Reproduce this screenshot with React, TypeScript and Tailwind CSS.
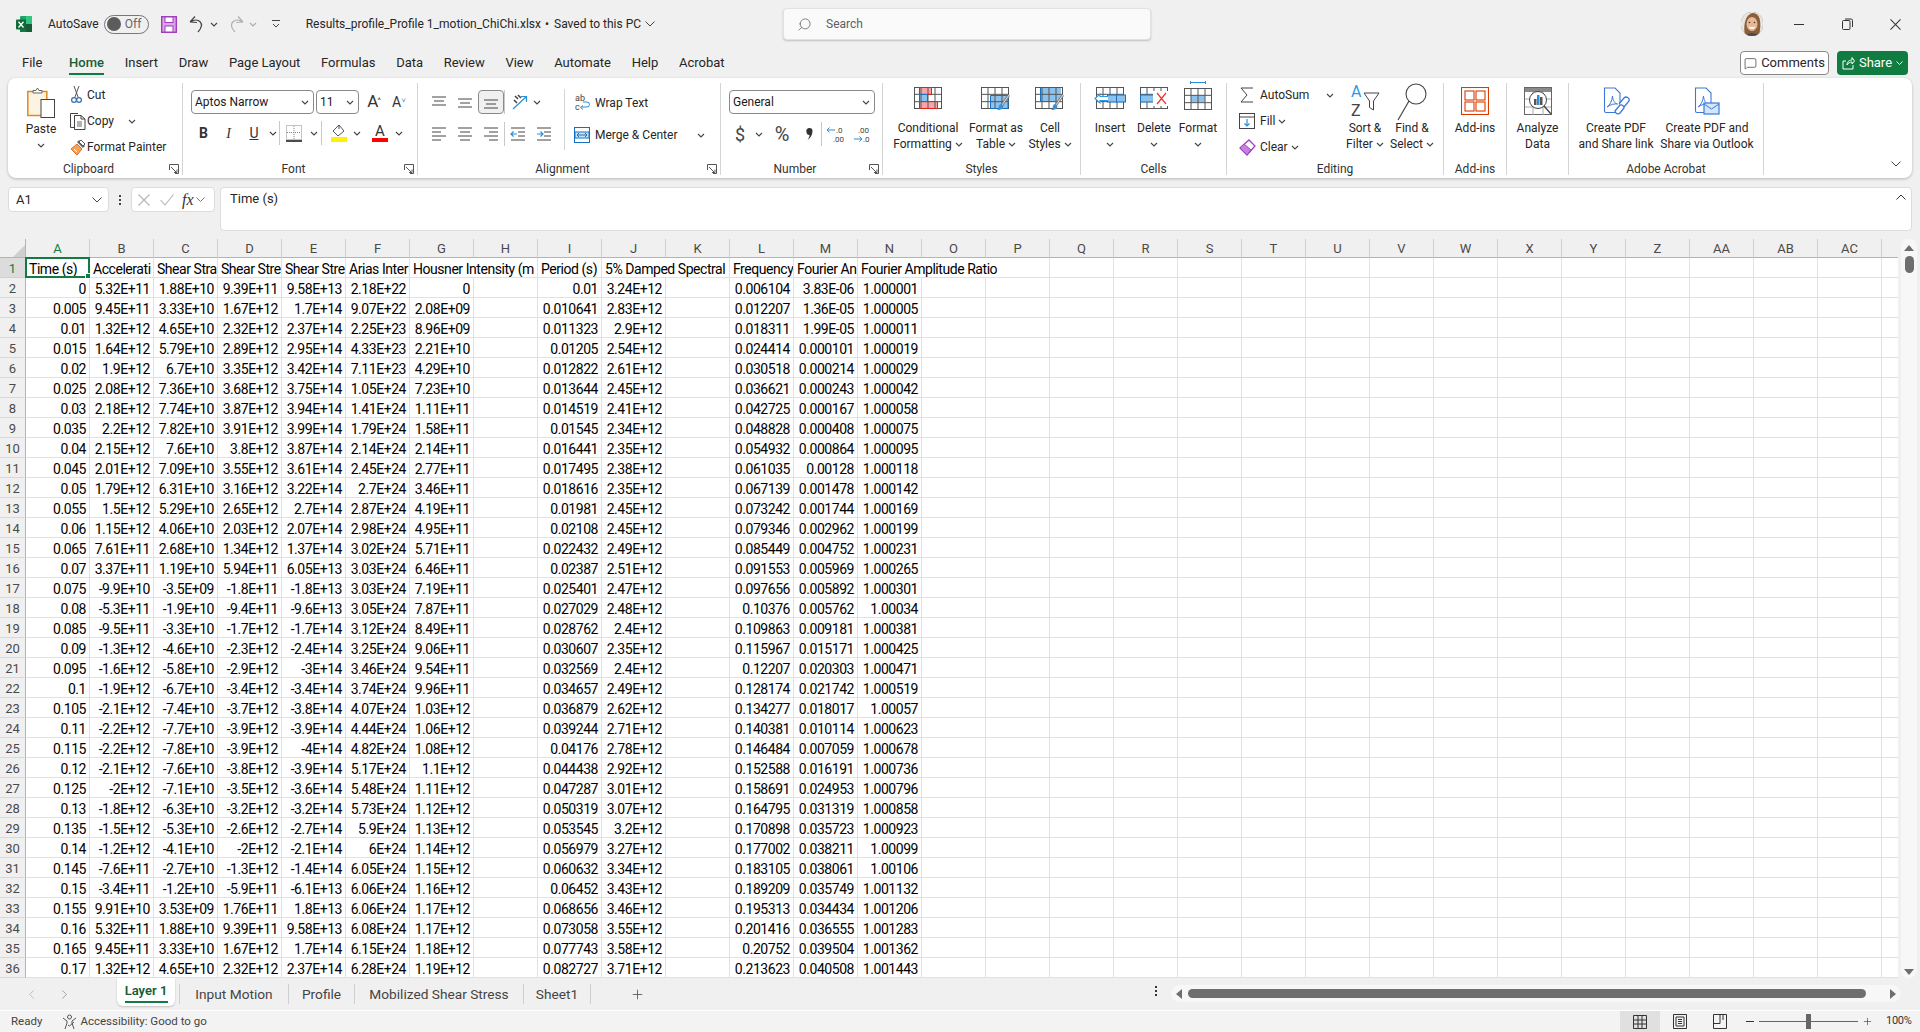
import type { ReactNode } from "react";
import { Search, Plus, ChevronLeft, ChevronRight, MessageSquare } from "lucide-react";

const FONT = "font-['Roboto','Liberation_Sans',sans-serif]";

const colLabels = "A B C D E F G H I J K L M N O P Q R S T U V W X Y Z AA AB AC".split(" ");

const titleCells = [
  { text: "Time (s)", span: "" },
  { text: "Accelerati", span: "" },
  { text: "Shear Stra", span: "" },
  { text: "Shear Stre", span: "" },
  { text: "Shear Stre", span: "" },
  { text: "Arias Inter", span: "" },
  { text: "Housner Intensity (m", span: "col-span-2" },
  { text: "Period (s)", span: "" },
  { text: "5% Damped Spectral", span: "col-span-2" },
  { text: "Frequency", span: "" },
  { text: "Fourier An", span: "" },
  { text: "Fourier Amplitude Ratio", span: "col-span-3" },
];

// A..G, H empty, I, J, K empty, L, M, N
const rawRows = `0|5.32E+11|1.88E+10|9.39E+11|9.58E+13|2.18E+22|0|0.01|3.24E+12|0.006104|3.83E-06|1.000001
0.005|9.45E+11|3.33E+10|1.67E+12|1.7E+14|9.07E+22|2.08E+09|0.010641|2.83E+12|0.012207|1.36E-05|1.000005
0.01|1.32E+12|4.65E+10|2.32E+12|2.37E+14|2.25E+23|8.96E+09|0.011323|2.9E+12|0.018311|1.99E-05|1.000011
0.015|1.64E+12|5.79E+10|2.89E+12|2.95E+14|4.33E+23|2.21E+10|0.01205|2.54E+12|0.024414|0.000101|1.000019
0.02|1.9E+12|6.7E+10|3.35E+12|3.42E+14|7.11E+23|4.29E+10|0.012822|2.61E+12|0.030518|0.000214|1.000029
0.025|2.08E+12|7.36E+10|3.68E+12|3.75E+14|1.05E+24|7.23E+10|0.013644|2.45E+12|0.036621|0.000243|1.000042
0.03|2.18E+12|7.74E+10|3.87E+12|3.94E+14|1.41E+24|1.11E+11|0.014519|2.41E+12|0.042725|0.000167|1.000058
0.035|2.2E+12|7.82E+10|3.91E+12|3.99E+14|1.79E+24|1.58E+11|0.01545|2.34E+12|0.048828|0.000408|1.000075
0.04|2.15E+12|7.6E+10|3.8E+12|3.87E+14|2.14E+24|2.14E+11|0.016441|2.35E+12|0.054932|0.000864|1.000095
0.045|2.01E+12|7.09E+10|3.55E+12|3.61E+14|2.45E+24|2.77E+11|0.017495|2.38E+12|0.061035|0.00128|1.000118
0.05|1.79E+12|6.31E+10|3.16E+12|3.22E+14|2.7E+24|3.46E+11|0.018616|2.35E+12|0.067139|0.001478|1.000142
0.055|1.5E+12|5.29E+10|2.65E+12|2.7E+14|2.87E+24|4.19E+11|0.01981|2.45E+12|0.073242|0.001744|1.000169
0.06|1.15E+12|4.06E+10|2.03E+12|2.07E+14|2.98E+24|4.95E+11|0.02108|2.45E+12|0.079346|0.002962|1.000199
0.065|7.61E+11|2.68E+10|1.34E+12|1.37E+14|3.02E+24|5.71E+11|0.022432|2.49E+12|0.085449|0.004752|1.000231
0.07|3.37E+11|1.19E+10|5.94E+11|6.05E+13|3.03E+24|6.46E+11|0.02387|2.51E+12|0.091553|0.005969|1.000265
0.075|-9.9E+10|-3.5E+09|-1.8E+11|-1.8E+13|3.03E+24|7.19E+11|0.025401|2.47E+12|0.097656|0.005892|1.000301
0.08|-5.3E+11|-1.9E+10|-9.4E+11|-9.6E+13|3.05E+24|7.87E+11|0.027029|2.48E+12|0.10376|0.005762|1.00034
0.085|-9.5E+11|-3.3E+10|-1.7E+12|-1.7E+14|3.12E+24|8.49E+11|0.028762|2.4E+12|0.109863|0.009181|1.000381
0.09|-1.3E+12|-4.6E+10|-2.3E+12|-2.4E+14|3.25E+24|9.06E+11|0.030607|2.35E+12|0.115967|0.015171|1.000425
0.095|-1.6E+12|-5.8E+10|-2.9E+12|-3E+14|3.46E+24|9.54E+11|0.032569|2.4E+12|0.12207|0.020303|1.000471
0.1|-1.9E+12|-6.7E+10|-3.4E+12|-3.4E+14|3.74E+24|9.96E+11|0.034657|2.49E+12|0.128174|0.021742|1.000519
0.105|-2.1E+12|-7.4E+10|-3.7E+12|-3.8E+14|4.07E+24|1.03E+12|0.036879|2.62E+12|0.134277|0.018017|1.00057
0.11|-2.2E+12|-7.7E+10|-3.9E+12|-3.9E+14|4.44E+24|1.06E+12|0.039244|2.71E+12|0.140381|0.010114|1.000623
0.115|-2.2E+12|-7.8E+10|-3.9E+12|-4E+14|4.82E+24|1.08E+12|0.04176|2.78E+12|0.146484|0.007059|1.000678
0.12|-2.1E+12|-7.6E+10|-3.8E+12|-3.9E+14|5.17E+24|1.1E+12|0.044438|2.92E+12|0.152588|0.016191|1.000736
0.125|-2E+12|-7.1E+10|-3.5E+12|-3.6E+14|5.48E+24|1.11E+12|0.047287|3.01E+12|0.158691|0.024953|1.000796
0.13|-1.8E+12|-6.3E+10|-3.2E+12|-3.2E+14|5.73E+24|1.12E+12|0.050319|3.07E+12|0.164795|0.031319|1.000858
0.135|-1.5E+12|-5.3E+10|-2.6E+12|-2.7E+14|5.9E+24|1.13E+12|0.053545|3.2E+12|0.170898|0.035723|1.000923
0.14|-1.2E+12|-4.1E+10|-2E+12|-2.1E+14|6E+24|1.14E+12|0.056979|3.27E+12|0.177002|0.038211|1.00099
0.145|-7.6E+11|-2.7E+10|-1.3E+12|-1.4E+14|6.05E+24|1.15E+12|0.060632|3.34E+12|0.183105|0.038061|1.00106
0.15|-3.4E+11|-1.2E+10|-5.9E+11|-6.1E+13|6.06E+24|1.16E+12|0.06452|3.43E+12|0.189209|0.035749|1.001132
0.155|9.91E+10|3.53E+09|1.76E+11|1.8E+13|6.06E+24|1.17E+12|0.068656|3.46E+12|0.195313|0.034434|1.001206
0.16|5.32E+11|1.88E+10|9.39E+11|9.58E+13|6.08E+24|1.17E+12|0.073058|3.55E+12|0.201416|0.036555|1.001283
0.165|9.45E+11|3.33E+10|1.67E+12|1.7E+14|6.15E+24|1.18E+12|0.077743|3.58E+12|0.20752|0.039504|1.001362
0.17|1.32E+12|4.65E+10|2.32E+12|2.37E+14|6.28E+24|1.19E+12|0.082727|3.71E+12|0.213623|0.040508|1.001443`;

const rows = rawRows.split("\n").map((line) => {
  const v = line.split("|");
  return [...v.slice(0, 7), "", v[7], v[8], "", v[9], v[10], v[11]];
});

function Chev({ className = "" }: { className?: string }) {
  return (
    <svg width="8" height="5" viewBox="0 0 8 5" fill="none" className={`shrink-0 ${className}`}>
      <path d="M1 1l3 3 3-3" stroke="#444" strokeWidth="1.1" />
    </svg>
  );
}

function XMark({ size, color, className = "" }: { size: number; color: string; className?: string }) {
  return (
    <svg width={size} height={size} viewBox="0 0 12 12" fill="none" className={`shrink-0 ${className}`}>
      <path d="M.5.5L11.500 11.500M11.500.5L.5 11.500" stroke={color} strokeWidth="1.100" />
    </svg>
  );
}

function Group({ width, label, launcher, children }: { width: string; label?: string; launcher?: boolean; children: ReactNode }) {
  return (
    <div className={`${width} h-[92px] shrink-0 flex flex-col border-r border-[#d4d4d4]`}>
      <div className="h-[78px] flex">{children}</div>
      <div className="h-[14px] pt-[1px] flex items-center">
        <span className="flex-1 text-center text-[12px] leading-[14px] text-[#333]">{label}</span>
        {launcher && (
          <svg width="10" height="10" viewBox="0 0 10 10" fill="none" className="mr-[3px]">
            <path d="M.5 6V.5H9.5V9.5H6M2 3l6 6M8 5.5V8.5H5" stroke="#555" strokeWidth="1" />
          </svg>
        )}
      </div>
    </div>
  );
}

function BigBtn({ width, icon, lines, chev }: { width: string; icon: ReactNode; lines: string[]; chev?: boolean }) {
  return (
    <div className={`${width} flex flex-col items-center text-[12px] leading-[16px] text-[#262626]`}>
      <div className="h-[37px] pt-[4px] flex items-start justify-center">{icon}</div>
      {lines.map((l, i) => (
        <div key={i} className="flex items-center gap-[3px] whitespace-nowrap">
          {l}
          {chev && lines.length > 1 && i === lines.length - 1 && <Chev />}
        </div>
      ))}
      {chev && lines.length === 1 && (
        <div className="h-[16px] flex items-center">
          <Chev />
        </div>
      )}
    </div>
  );
}

function ComboBox({ width, text }: { width: string; text: string }) {
  return (
    <div className={`${width} h-[24px] rounded-[4px] border border-[#8a8a8a] bg-white flex items-center justify-between pl-[3px] pr-[4px] text-[12px] text-[#1a1a1a]`}>
      <span>{text}</span>
      <Chev />
    </div>
  );
}

function Slot({ width, children, className = "" }: { width: string; children: ReactNode; className?: string }) {
  return <div className={`${width} h-[24px] shrink-0 flex items-center justify-center ${className}`}>{children}</div>;
}

const VSep = () => <div className="w-[1px] h-[24px] bg-[#c8c8c8] shrink-0" />;

function AlignLines({ ys, x }: { ys: number[]; x: number[][] }) {
  return (
    <svg width="16" height="16" viewBox="0 0 16 16" fill="none">
      {ys.map((y, i) => (
        <path key={i} d={`M${x[i][0]} ${y}H${x[i][1]}`} stroke="#444" strokeWidth="1" />
      ))}
    </svg>
  );
}

function Grid4({ w = 28, h = 22 }: { w?: number; h?: number }) {
  const cw = w / 4;
  return (
    <g stroke="#555" strokeWidth="1" fill="none">
      <rect x=".5" y=".5" width={w - 1} height={h - 1} />
      <path d={`M${cw} 0V${h}M${cw * 2} 0V${h}M${cw * 3} 0V${h}M0 ${h / 3}H${w}M0 ${(h * 2) / 3}H${w}`} />
    </g>
  );
}

const Brush = () => (
  <g>
    <path d="M28 8L21 18" stroke="#7a7a7a" strokeWidth="2.6" />
    <path d="M28 8L21 18" stroke="#fff" strokeWidth=".8" />
    <path d="M20 17c2 .5 3 2 2 4-1 1.5-3 2-6 2 1.500-1 1.500-2 2-4 .4-1.200 1-2 2-2z" fill="#3a8fd6" />
  </g>
);

const ExcelLogo = () => (
  <svg width="16" height="16" viewBox="0 0 16 16">
    <rect x="4" y="0" width="12" height="16" rx="1" fill="#21a366" />
    <rect x="10" y="0" width="6" height="8" fill="#33c481" />
    <rect x="4" y="8" width="6" height="8" fill="#107c41" />
    <rect x="10" y="8" width="6" height="8" fill="#185c37" />
    <rect x="0" y="3.500" width="10" height="10" rx="1" fill="#0f6b3a" />
    <path d="M2.500 5.800L7.500 11.500M7.500 5.800L2.500 11.500" stroke="#fff" strokeWidth="1.300" />
  </svg>
);

const SaveIcon = () => (
  <svg width="16" height="17" viewBox="0 0 16 17" fill="none">
    <rect x=".7" y=".7" width="14.6" height="15.6" fill="#d9a7e6" stroke="#a13dbf" strokeWidth="1.4" />
    <rect x="4" y="1" width="8" height="5.500" fill="#fff" stroke="#a13dbf" />
    <rect x="4" y="10" width="8" height="6" fill="#fff" stroke="#a13dbf" />
  </svg>
);

const UndoIcon = ({ color }: { color: string }) => (
  <svg width="16" height="18" viewBox="0 0 16 18" fill="none">
    <path d="M1 7L6 1.500M1 7l7 .5M1.500 7C9 2 17 8 9 17" stroke={color} strokeWidth="1.200" />
  </svg>
);

const ScissorsIcon = () => (
  <svg width="11" height="18" viewBox="0 0 11 18" fill="none">
    <path d="M3 0L7 11M8 0L4 11" stroke="#555" strokeWidth="1" />
    <circle cx="3" cy="14" r="2.400" stroke="#2f6fb0" strokeWidth="1.200" />
    <circle cx="8" cy="14" r="2.400" stroke="#2f6fb0" strokeWidth="1.200" />
  </svg>
);

const PasteIcon = () => (
  <svg width="29" height="31" viewBox="0 0 29 31" fill="none">
    <rect x=".8" y="4.500" width="19" height="24" fill="#fdf3e3" stroke="#e08a1e" strokeWidth="1.500" />
    <path d="M6 6V3.500h3L10.500 1 12 3.500h3V6z" fill="#fff" stroke="#666" />
    <rect x="14" y="12.500" width="13.500" height="18" fill="#fff" stroke="#444" />
  </svg>
);

const CopyIcon = () => (
  <svg width="16" height="17" viewBox="0 0 16 17" fill="none" stroke="#444">
    <path d="M4.500 14.500H.5V.5H8" />
    <path d="M4.500 2.500H11L15 6V16.500H4.500zM11 2.500V6H15" />
    <path d="M7 9h5M7 11h5M7 13h5" stroke="#666" />
  </svg>
);

const PainterIcon = () => (
  <svg width="17" height="18" viewBox="0 0 17 18" fill="none">
    <path d="M8 3L14 9" stroke="#666" strokeWidth="3" />
    <path d="M11 2l4 4-2 2-4-4z" fill="#fff" stroke="#555" />
    <path d="M7 6l5 5-5 6-6-6z" fill="#f4a259" stroke="#d9701f" />
    <path d="M4 11l3 3" stroke="#fff" />
  </svg>
);

const CondFmtIcon = () => (
  <svg width="28" height="22" viewBox="0 0 28 22" fill="none">
    <rect x="5.500" y=".5" width="12" height="7" fill="#f9a5a8" />
    <rect x="5.500" y="7.500" width="8" height="7" fill="#8cc3ee" />
    <rect x="5.500" y="14.500" width="18" height="7" fill="#f9a5a8" />
    <Grid4 />
    <rect x="5.500" y=".5" width="12" height="7" stroke="#e2231a" />
    <rect x="5.500" y="14.500" width="18" height="7" stroke="#e2231a" />
    <rect x="5.500" y="7.500" width="8" height="7" stroke="#1570c0" />
  </svg>
);

const TableIcon = () => (
  <svg width="30" height="27" viewBox="0 0 30 27" fill="none">
    <rect x="9" y="8" width="18" height="14" fill="#8cc3ee" />
    <Grid4 />
    <path d="M9.500 8.500H27V21.500H9.500z" stroke="#1570c0" />
    <Brush />
  </svg>
);

const CellStyleIcon = () => (
  <svg width="30" height="27" viewBox="0 0 30 27" fill="none">
    <rect x="5" y="1" width="21" height="14" fill="#8cc3ee" />
    <Grid4 />
    <path d="M5.500 1V14.500H26" stroke="#1570c0" />
    <Brush />
  </svg>
);

const InsertIcon = () => (
  <svg width="32" height="22" viewBox="0 0 32 22" fill="none">
    <g transform="translate(2 0)"><Grid4 /></g>
    <rect x="13.500" y="8" width="18" height="7" fill="#8cc3ee" stroke="#1570c0" />
    <path d="M22.500 8V15" stroke="#1570c0" />
    <path d="M14 9.500H6V7L1 11.500 6 16v-2.500h8" fill="#fff" stroke="#2b9ae6" strokeWidth="1.100" />
  </svg>
);

const DeleteIcon = () => (
  <svg width="28" height="22" viewBox="0 0 28 22" fill="none">
    <Grid4 />
    <rect x=".5" y="8" width="13" height="7" fill="#8cc3ee" stroke="#1570c0" />
    <rect x="13" y="4" width="15" height="15" fill="#fff" />
    <path d="M17 6l9 11M26 6l-9 11" stroke="#e8382f" strokeWidth="1.200" />
  </svg>
);

const FormatIcon = () => (
  <svg width="28" height="29" viewBox="0 0 28 29" fill="none">
    <path d="M6 1.500H22M6.500 0v3M21.500 0v3" stroke="#2b8fd6" />
    <g transform="translate(0 7)">
      <rect x="7" y="7" width="14" height="7" fill="#8cc3ee" />
      <Grid4 />
    </g>
  </svg>
);

const SortIcon = () => (
  <svg width="30" height="37" viewBox="0 0 30 37" fill="none">
    <text x="1" y="14" fontSize="16" fill="#2b9ae6" fontFamily="Roboto">A</text>
    <text x="1" y="33" fontSize="16" fill="#444" fontFamily="Roboto">Z</text>
    <path d="M14 10H29L23.500 18V27L19.500 24.500V18z" fill="#fff" stroke="#444" />
  </svg>
);

const FindIcon = () => (
  <svg width="30" height="38" viewBox="0 0 30 38" fill="none">
    <circle cx="19" cy="11" r="10" stroke="#444" strokeWidth="1.100" />
    <path d="M12 18L1 37" stroke="#444" strokeWidth="1.200" />
  </svg>
);

const AddinsIcon = () => (
  <svg width="28" height="28" viewBox="0 0 28 28" fill="none" stroke="#d83b01" strokeWidth="1.100">
    <rect x=".5" y=".5" width="27" height="27" />
    <rect x="4" y="4" width="9" height="9" />
    <rect x="15" y="4" width="9" height="9" />
    <rect x="4" y="15" width="9" height="9" />
    <rect x="15" y="15" width="9" height="9" />
  </svg>
);

const AnalyzeIcon = () => (
  <svg width="28" height="29" viewBox="0 0 28 29" fill="none">
    <rect x=".5" y=".5" width="27" height="27" stroke="#666" />
    <rect x="1" y="1" width="26" height="4" fill="#8a8a8a" />
    <path d="M1 12H27M1 20H27M9 5V28M19 5V28" stroke="#aaa" />
    <circle cx="14" cy="13" r="8.500" fill="#fff" stroke="#444" />
    <rect x="10" y="12" width="2.500" height="6" fill="#555" />
    <rect x="13" y="8" width="2.500" height="10" fill="#2b8fd6" />
    <rect x="16" y="10" width="2.500" height="8" fill="#555" />
    <path d="M20 19L27 27" stroke="#444" strokeWidth="1.300" />
  </svg>
);

const PdfDoc = () => (
  <>
    <path d="M2.500 1H13L18 6V25.500H4A1.500 1.500 0 012.500 24z" fill="#fff" stroke="#3b78d8" strokeWidth="1.100" />
    <path d="M5 20c3-2 5-6 5.500-11 .5 5 2 7 5 8-3-.5-7 .5-10.500 3z" stroke="#3b78d8" />
  </>
);

const PdfLinkIcon = () => (
  <svg width="28" height="29" viewBox="0 0 28 29" fill="none">
    <PdfDoc />
    <path d="M13 24l5-6a3 3 0 014 3l-4 5a3 3 0 01-5-2zM17 17l5-6a3 3 0 015 3l-5 6" stroke="#3b78d8" strokeWidth="1.300" fill="#fff" />
  </svg>
);

const PdfMailIcon = () => (
  <svg width="28" height="29" viewBox="0 0 28 29" fill="none">
    <PdfDoc />
    <rect x="11" y="16" width="15" height="11" fill="#d5e5fa" stroke="#3b78d8" strokeWidth="1.200" />
    <path d="M11 17l7.500 5L26 17" stroke="#3b78d8" />
  </svg>
);

function Ribbon() {
  return (
    <div className="ml-[8px] mr-[8px] h-[100px] pt-[5px] rounded-[8px] bg-white shadow-[0_1px_3px_rgba(0,0,0,0.25)] flex shrink-0">
      <Group width="w-[175px]" label="Clipboard" launcher>
        <div className="ml-[14px] w-[38px] flex flex-col items-center text-[12px] leading-[16px] text-[#262626]">
          <div className="h-[37px] pt-[4px]"><PasteIcon /></div>
          <span className="mt-[1px]">Paste</span>
          <div className="h-[16px] flex items-center"><Chev /></div>
        </div>
        <div className="ml-[10px] -mt-[1px] flex flex-col text-[12px] text-[#262626]">
          <div className="h-[26px] flex items-center"><div className="w-[17px] pl-[1px]"><ScissorsIcon /></div><span>Cut</span></div>
          <div className="h-[26px] flex items-center"><div className="w-[17px]"><CopyIcon /></div><span>Copy</span><Chev className="ml-[14px]" /></div>
          <div className="h-[26px] flex items-center"><div className="w-[17px]"><PainterIcon /></div><span>Format Painter</span></div>
        </div>
      </Group>

      <Group width="w-[235px]" label="Font" launcher>
        <div className="pl-[8px] pt-[7px] flex flex-col gap-[7px]">
          <div className="flex items-center">
            <ComboBox width="w-[123px]" text="Aptos Narrow" />
            <ComboBox width="w-[43px] ml-[2px]" text="11" />
            <Slot width="w-[20px] ml-[5px]"><span className="text-[17px] text-[#333]">A<sup className="text-[8px] -ml-[1px]">^</sup></span></Slot>
            <Slot width="w-[20px] ml-[5px]"><span className="text-[14px] text-[#333]">A<sup className="text-[8px] text-[#2b8fd6]">˅</sup></span></Slot>
          </div>
          <div className="flex items-center text-[#333]">
            <Slot width="w-[25px]"><span className="text-[14px] font-bold">B</span></Slot>
            <Slot width="w-[25px]"><span className="text-[14px] italic font-['Liberation_Serif',serif]">I</span></Slot>
            <Slot width="w-[26px]"><span className="text-[14px] underline">U</span></Slot>
            <Slot width="w-[12px]"><Chev /></Slot>
            <VSep />
            <Slot width="w-[26px] ml-[1px]">
              <svg width="16" height="17" viewBox="0 0 16 17" fill="none">
                <path d="M.5.5H15.500V14.500H.5zM8 1V14M1 7.500H15" stroke="#888" strokeDasharray="1 1" />
                <path d="M0 16H16" stroke="#111" strokeWidth="1.500" />
              </svg>
            </Slot>
            <Slot width="w-[14px]"><Chev /></Slot>
            <VSep />
            <Slot width="w-[28px] ml-[3px]">
              <svg width="16" height="18" viewBox="0 0 16 18" fill="none">
                <path d="M8 1L13 7 7 12 2 7z" fill="#fff" stroke="#555" />
                <path d="M8 1V5" stroke="#555" />
                <rect x="0" y="13" width="16" height="5" fill="#fff200" />
              </svg>
            </Slot>
            <Slot width="w-[8px]"><Chev /></Slot>
            <Slot width="w-[30px] ml-[4px]">
              <div className="flex flex-col items-center leading-[14px]">
                <span className="text-[15px] text-[#333] h-[14px]">A</span>
                <span className="w-[16px] h-[4px] bg-[#ff0000]" />
              </div>
            </Slot>
            <Slot width="w-[8px]"><Chev /></Slot>
          </div>
        </div>
      </Group>

      <Group width="w-[303px]" label="Alignment" launcher>
        <div className="pl-[8px] pt-[7px] flex flex-col gap-[8px]">
          <div className="flex items-center">
            <Slot width="w-[26px]"><AlignLines ys={[3, 7, 11]} x={[[1, 15], [3, 13], [1, 15]]} /></Slot>
            <Slot width="w-[26px]"><AlignLines ys={[5, 9, 13]} x={[[1, 15], [3, 13], [1, 15]]} /></Slot>
            <Slot width="w-[26px]" className="rounded-[4px] bg-[#f0f0f0] border border-[#8a8a8a]"><AlignLines ys={[6, 10, 14]} x={[[1, 15], [3, 13], [1, 15]]} /></Slot>
            <VSep />
            <Slot width="w-[26px] ml-[2px]">
              <svg width="17" height="17" viewBox="0 0 17 17" fill="none">
                <path d="M1 15L14 3M9 2.500H14.500V8" stroke="#2b8fd6" strokeWidth="1.200" />
                <path d="M3 2l3 3M6 1l3 3M2 6l3 3" stroke="#444" strokeWidth="1.500" />
              </svg>
            </Slot>
            <Slot width="w-[8px]"><Chev /></Slot>
          </div>
          <div className="flex items-center">
            <Slot width="w-[26px]"><AlignLines ys={[2, 6, 10, 14]} x={[[1, 15], [1, 10], [1, 15], [1, 10]]} /></Slot>
            <Slot width="w-[26px]"><AlignLines ys={[2, 6, 10, 14]} x={[[1, 15], [3, 13], [1, 15], [3, 13]]} /></Slot>
            <Slot width="w-[26px]"><AlignLines ys={[2, 6, 10, 14]} x={[[1, 15], [6, 15], [1, 15], [6, 15]]} /></Slot>
            <VSep />
            <Slot width="w-[26px]">
              <svg width="16" height="16" viewBox="0 0 16 16" fill="none">
                <path d="M1 2H15M1 14H15M8 6H15M8 10H15" stroke="#444" />
                <path d="M7 8H1M3.500 5.500L1 8l2.500 2.500" stroke="#2b8fd6" strokeWidth="1.200" />
              </svg>
            </Slot>
            <Slot width="w-[26px]">
              <svg width="16" height="16" viewBox="0 0 16 16" fill="none">
                <path d="M1 2H15M1 14H15M8 6H15M8 10H15" stroke="#444" />
                <path d="M1 8H7M4.500 5.500L7 8l-2.500 2.500" stroke="#2b8fd6" strokeWidth="1.200" />
              </svg>
            </Slot>
          </div>
        </div>
        <div className="ml-[7px] mt-[6px] w-[1px] h-[61px] bg-[#d4d4d4]" />
        <div className="ml-[9px] pt-[6px] flex flex-col text-[12px] text-[#262626] whitespace-nowrap">
          <div className="h-[28px] flex items-center gap-[3px]">
            <svg width="18" height="20" viewBox="0 0 18 20" fill="none">
              <text x="1" y="8" fontSize="9" fill="#444" fontFamily="Roboto">ab</text>
              <text x="1" y="17" fontSize="9" fill="#444" fontFamily="Roboto">c</text>
              <path d="M7 14h6a2.500 2.500 0 000-5H9M9 12.500L6.500 14.500 9 16.500" stroke="#2b8fd6" />
            </svg>
            <span>Wrap Text</span>
          </div>
          <div className="h-[32px] pt-[4px] flex items-center gap-[5px]">
            <svg width="16" height="18" viewBox="0 0 16 18" fill="none">
              <rect x=".5" y="1.500" width="15" height="15" stroke="#1570c0" />
              <rect x="1" y="6" width="14" height="6" fill="#cfe4f7" stroke="#1570c0" />
              <path d="M3 9H13M5 7l-2 2 2 2M11 7l2 2-2 2" stroke="#1570c0" />
            </svg>
            <span>Merge & Center</span>
            <Chev className="ml-[15px]" />
          </div>
        </div>
      </Group>

      <Group width="w-[162px]" label="Number" launcher>
        <div className="pl-[8px] pt-[7px] flex flex-col gap-[8px]">
          <ComboBox width="w-[146px]" text="General" />
          <div className="flex items-center text-[#444]">
            <Slot width="w-[22px]"><span className="text-[18px]">$</span></Slot>
            <Slot width="w-[16px]"><Chev /></Slot>
            <Slot width="w-[30px]"><span className="text-[20px]">%</span></Slot>
            <Slot width="w-[24px]">
              <svg width="7" height="14" viewBox="0 0 7 14"><path d="M3.500 1a3 3 0 013 3c0 4-2 7-5 9 1.500-2 2-4 2-5a3 3 0 01-3-3 3 3 0 013-4z" fill="#333" /></svg>
            </Slot>
            <VSep />
            <Slot width="w-[26px]">
              <svg width="18" height="18" viewBox="0 0 18 18" fill="none">
                <path d="M9 5H1M3.500 2.500L1 5l2.500 2.500" stroke="#2b8fd6" />
                <text x="10" y="8" fontSize="8" fill="#444" fontFamily="Roboto">.0</text>
                <text x="7" y="17" fontSize="8" fill="#444" fontFamily="Roboto">.00</text>
              </svg>
            </Slot>
            <Slot width="w-[27px]">
              <svg width="18" height="18" viewBox="0 0 18 18" fill="none">
                <path d="M1 14H9M6.500 11.500L9 14l-2.500 2.500" stroke="#2b8fd6" />
                <text x="5" y="8" fontSize="8" fill="#444" fontFamily="Roboto">.00</text>
                <text x="10" y="17" fontSize="8" fill="#444" fontFamily="Roboto">.0</text>
              </svg>
            </Slot>
          </div>
        </div>
      </Group>

      <Group width="w-[198px]" label="Styles">
        <div className="pl-[7px] flex">
          <BigBtn width="w-[76px]" icon={<CondFmtIcon />} lines={["Conditional", "Formatting"]} chev />
          <BigBtn width="w-[60px]" icon={<TableIcon />} lines={["Format as", "Table"]} chev />
          <BigBtn width="w-[48px]" icon={<CellStyleIcon />} lines={["Cell", "Styles"]} chev />
        </div>
      </Group>

      <Group width="w-[146px]" label="Cells">
        <div className="pl-[7px] flex">
          <BigBtn width="w-[44px]" icon={<InsertIcon />} lines={["Insert"]} chev />
          <BigBtn width="w-[44px]" icon={<DeleteIcon />} lines={["Delete"]} chev />
          <BigBtn width="w-[44px]" icon={<div className="-mt-[6px]"><FormatIcon /></div>} lines={["Format"]} chev />
        </div>
      </Group>

      <Group width="w-[217px]" label="Editing">
        <div className="pl-[9px] flex">
          <div className="w-[106px] -mt-[1px] flex flex-col text-[12px] text-[#262626]">
            <div className="h-[26px] flex items-center">
              <div className="w-[24px] flex justify-start pl-[4px]">
                <svg width="14" height="16" viewBox="0 0 14 16" fill="none"><path d="M13 1H1l6 7-6 7h12" stroke="#444" /></svg>
              </div>
              <span>AutoSum</span>
              <Chev className="ml-[17px]" />
            </div>
            <div className="h-[26px] flex items-center">
              <div className="w-[24px] pl-[3px]">
                <svg width="16" height="16" viewBox="0 0 16 16" fill="none">
                  <rect x=".5" y=".5" width="15" height="15" stroke="#444" />
                  <path d="M1 4H15" stroke="#444" />
                  <path d="M8 6V13M5.500 10.500L8 13l2.500-2.500" stroke="#2b8fd6" strokeWidth="1.200" />
                </svg>
              </div>
              <span>Fill</span>
              <Chev className="ml-[3px]" />
            </div>
            <div className="h-[26px] flex items-center">
              <div className="w-[24px] pl-[3px]">
                <svg width="17" height="17" viewBox="0 0 17 17" fill="none">
                  <path d="M10 1L16 7 8 16 1 9z" fill="#fff" stroke="#a13dbf" strokeWidth="1.300" />
                  <path d="M5 5L12 11 8 16 1 9z" fill="#c77fdc" stroke="#a13dbf" />
                </svg>
              </div>
              <span>Clear</span>
              <Chev className="ml-[3px]" />
            </div>
          </div>
          <BigBtn width="w-[46px]" icon={<div className="-mt-[4px]"><SortIcon /></div>} lines={["Sort &", "Filter"]} chev />
          <BigBtn width="w-[48px]" icon={<div className="-mt-[4px]"><FindIcon /></div>} lines={["Find &", "Select"]} chev />
        </div>
      </Group>

      <Group width="w-[63px]" label="Add-ins">
        <BigBtn width="w-full" icon={<AddinsIcon />} lines={["Add-ins"]} />
      </Group>

      <Group width="w-[62px]">
        <BigBtn width="w-full" icon={<AnalyzeIcon />} lines={["Analyze", "Data"]} />
      </Group>

      <Group width="w-[195px]" label="Adobe Acrobat">
        <div className="pl-[6px] flex">
          <BigBtn width="w-[82px]" icon={<PdfLinkIcon />} lines={["Create PDF", "and Share link"]} />
          <BigBtn width="w-[100px]" icon={<PdfMailIcon />} lines={["Create PDF and", "Share via Outlook"]} />
        </div>
      </Group>

      <div className="flex-1 flex justify-end items-start pt-[78px] pr-[11px]">
        <svg width="10" height="6" viewBox="0 0 10 6" fill="none"><path d="M.5.5L5 5 9.500.5" stroke="#444" /></svg>
      </div>
    </div>
  );
}

function Sheet() {
  const headerCell = "flex items-center justify-center pt-[1px] bg-[#f0f0f0] text-[13px] text-[#4a4a4a] border-r border-[#d0d0d0]";
  const cell = "border-r border-b border-[#e1e1e1] overflow-hidden whitespace-nowrap pt-[3px] text-[14px] leading-[16px] tracking-[-0.45px] text-black";
  return (
    <div className="flex-1 overflow-hidden grid grid-cols-[26px_repeat(29,64px)_16px] grid-rows-[19px_repeat(36,20px)] bg-white">
      <div className="bg-[#f0f0f0] border-r border-b border-[#b4b4b4] flex items-end justify-end">
        <div className="w-0 h-0 border-l-[12px] border-l-transparent border-b-[12px] border-b-[#cfcfcf]" />
      </div>
      {colLabels.map((c) => (
        <div key={c} className={`${headerCell} border-b ${c === "A" ? "bg-[#d3d3d3] text-[#107c41] border-b-[#107c41]" : "border-b-[#b4b4b4]"}`}>
          {c}
        </div>
      ))}
      <div className={`${headerCell} border-b border-b-[#b4b4b4] border-r-0`} />

      <div className="bg-[#dcdcdc] text-[#107c41] text-[13px] pt-[3px] flex items-center justify-center border-r border-b border-r-[#107c41] border-b-[#d0d0d0]">1</div>
      {titleCells.map((t, i) => (
        <div key={i} className={`${cell} ${t.span} pl-[3px] relative ${i === 0 ? "overflow-visible" : ""}`}>
          {t.text}
          {i === 0 && (
            <div className="absolute -left-[1px] -top-[1px] right-[-1px] bottom-[-1px] border-2 border-[#107c41]">
              <div className="absolute -right-[3px] -bottom-[3px] w-[6px] h-[6px] bg-[#107c41] border border-white" />
            </div>
          )}
        </div>
      ))}
      {colLabels.slice(16).map((c) => (
        <div key={c} className={cell} />
      ))}
      <div className={`${cell} border-r-0`} />

      {rows.map((r, i) => (
        <div key={i} className="contents">
          <div className="bg-[#f0f0f0] text-[#4a4a4a] text-[13px] pt-[3px] flex items-center justify-center border-r border-b border-r-[#b4b4b4] border-b-[#d8d8d8]">{i + 2}</div>
          {r.map((v, j) => (
            <div key={j} className={`${cell} text-right pr-[3px]`}>{v}</div>
          ))}
          {colLabels.slice(14).map((c) => (
            <div key={c} className={cell} />
          ))}
          <div className={`${cell} border-r-0`} />
        </div>
      ))}
    </div>
  );
}

export default function App() {
  return (
    <div className={`w-[1920px] h-[1032px] overflow-hidden bg-[#f0f0f0] flex flex-col ${FONT}`}>
      {/* title bar */}
      <div className="h-[48px] flex items-center text-[12px] text-[#262626] shrink-0">
        <div className="ml-[16px]"><ExcelLogo /></div>
        <span className="ml-[16px]">AutoSave</span>
        <div className="ml-[5px] w-[45px] h-[19px] rounded-full border border-[#777] flex items-center pl-[2px] gap-[4px]">
          <div className="w-[14px] h-[14px] rounded-full bg-[#5c5c5c]" />
          <span className="text-[#666]">Off</span>
        </div>
        <div className="ml-[12px]"><SaveIcon /></div>
        <div className="ml-[12px]"><UndoIcon color="#444" /></div>
        <Chev className="ml-[5px]" />
        <div className="ml-[10px] scale-x-[-1]"><UndoIcon color="#b0b0b0" /></div>
        <Chev className="ml-[5px] opacity-40" />
        <svg width="10" height="10" viewBox="0 0 10 10" fill="none" className="ml-[14px]"><path d="M1 1.500H9M2 5l3 3 3-3" stroke="#444" /></svg>
        <span className="ml-[25px] whitespace-nowrap">Results_profile_Profile 1_motion_ChiChi.xlsx</span>
        <span className="ml-[4px]">•</span>
        <span className="ml-[5px] whitespace-nowrap">Saved to this PC</span>
        <svg width="10" height="6" viewBox="0 0 10 6" fill="none" className="ml-[4px]"><path d="M.5.5L5 5 9.500.5" stroke="#444" /></svg>
        <div className="ml-[128px] w-[368px] h-[32px] rounded-[4px] bg-[#fafafa] border border-[#e2e2e2] shadow-[0_1px_2px_rgba(0,0,0,0.2)] flex items-center pl-[13px] gap-[14px] text-[#5f5f5f]">
          <Search size={15} strokeWidth={1.2} className="scale-x-[-1]" />
          <span>Search</span>
        </div>
        <div className="flex-1" />
        <div className="w-[22px] h-[24px] rounded-full overflow-hidden mr-[31px] flex justify-center bg-[#7a6a55]">
          <svg width="22" height="24" viewBox="0 0 22 24">
            <rect width="22" height="24" fill="#e9e6e2" />
            <path d="M4 24C2 14 4 2 12 1c7 0 9 9 6 23z" fill="#8a5f3a" />
            <ellipse cx="11" cy="12" rx="5.500" ry="7" fill="#e8b898" />
            <path d="M8 15c2 2 4 2 6 0" stroke="#fff" fill="#fff" />
            <circle cx="8.500" cy="10.500" r=".8" fill="#333" />
            <circle cx="13.500" cy="10.500" r=".8" fill="#333" />
            <path d="M5 24c1-4 11-4 13 0z" fill="#4a4a50" />
          </svg>
        </div>
        <div className="w-[10px] h-[1px] bg-[#333]" />
        <svg width="11" height="12" viewBox="0 0 11 12" fill="none" className="ml-[38px]"><rect x=".5" y="2.500" width="7.500" height="9" rx="1" stroke="#333" /><path d="M3 1h6a1.500 1.500 0 011.500 1.500V9" stroke="#333" /></svg>
        <XMark size={11} color="#333" className="ml-[37px] mr-[19px]" />
      </div>

      {/* tabs row */}
      <div className="h-[30px] flex items-start text-[13px] text-[#262626] shrink-0">
        <div className="ml-[22px] flex gap-[20.7px] pt-[6px] leading-[18px]">
          <span className="mr-[6px]">File</span>
          <div className="relative font-medium text-[#185c37]">
            Home
            <div className="absolute left-0 right-0 top-[19px] h-[2px] bg-[#107c41]" />
          </div>
          <span>Insert</span>
          <span>Draw</span>
          <span>Page Layout</span>
          <span>Formulas</span>
          <span>Data</span>
          <span>Review</span>
          <span>View</span>
          <span>Automate</span>
          <span>Help</span>
          <span>Acrobat</span>
        </div>
        <div className="flex-1" />
        <div className="mt-[3px] h-[24px] w-[89px] rounded-[4px] bg-white border border-[#8a8a8a] flex items-center justify-center gap-[4px] text-[13px]">
          <MessageSquare size={13} strokeWidth={1.2} />
          Comments
        </div>
        <div className="mt-[3px] ml-[8px] mr-[12px] h-[24px] w-[71px] rounded-[4px] bg-[#107c41] text-white flex items-center justify-center gap-[4px] text-[13px]">
          <svg width="13" height="14" viewBox="0 0 13 14" fill="none"><path d="M4 5H1V13H11V9M5 9C5 5 8 4 10 4V1.500L12.500 5 10 8V6C8 6 6 7 5 9z" stroke="#fff" /></svg>
          Share
          <svg width="7" height="4" viewBox="0 0 7 4" fill="none"><path d="M.5.5l3 3 3-3" stroke="#fff" /></svg>
        </div>
      </div>

      <Ribbon />

      {/* formula bar */}
      <div className="h-[61px] pt-[9px] pl-[8px] pr-[8px] flex items-start shrink-0 text-[#262626]">
        <div className="w-[101px] h-[25px] rounded-[4px] bg-white border border-[#dcdcdc] flex items-center justify-between pl-[7px] pr-[6px] text-[13px]">
          A1
          <svg width="10" height="6" viewBox="0 0 10 6" fill="none"><path d="M.5.5L5 5 9.500.5" stroke="#444" /></svg>
        </div>
        <div className="w-[22px] h-[25px] flex flex-col items-center justify-center gap-[2px]">
          <span className="w-[2px] h-[2px] bg-[#444]" />
          <span className="w-[2px] h-[2px] bg-[#444]" />
          <span className="w-[2px] h-[2px] bg-[#444]" />
        </div>
        <div className="w-[84px] h-[25px] rounded-[4px] bg-white border border-[#dcdcdc] flex items-center pl-[6px]">
          <XMark size={12} color="#b5b5b5" />
          <svg width="14" height="12" viewBox="0 0 14 12" fill="none" className="ml-[10px]"><path d="M.5 6L5 11 13.500.5" stroke="#b5b5b5" strokeWidth="1.100" /></svg>
          <span className="ml-[8px] text-[16px] italic text-[#333] font-['Liberation_Serif',serif]">fx</span>
          <svg width="9" height="5" viewBox="0 0 9 5" fill="none" className="ml-[2px]"><path d="M.5.5l4 4 4-4" stroke="#777" /></svg>
        </div>
        <div className="ml-[5px] flex-1 h-[44px] rounded-[4px] bg-white border border-[#dcdcdc] flex items-start justify-between pl-[9px] pr-[4px] pt-[2px] text-[13px] leading-[18px]">
          Time (s)
          <svg width="10" height="6" viewBox="0 0 10 6" fill="none" className="mt-[4px] mr-[1px]"><path d="M.5 5.500L5 1l4.500 4.500" stroke="#333" /></svg>
        </div>
      </div>

      {/* sheet + vertical scrollbar */}
      <div className="h-[739px] flex shrink-0 overflow-hidden">
        <Sheet />
        <div className="w-[22px] shrink-0 flex justify-center">
          <div className="w-[16px] h-full rounded-full bg-[#f7f7f7] flex flex-col items-center pt-[6px] pb-[3px]">
            <div className="w-0 h-0 border-x-[5px] border-x-transparent border-b-[6px] border-b-[#6e6e6e]" />
            <div className="mt-[5px] w-[9px] h-[17px] rounded-full bg-[#6e6e6e]" />
            <div className="flex-1" />
            <div className="w-0 h-0 border-x-[5px] border-x-transparent border-t-[6px] border-t-[#6e6e6e]" />
          </div>
        </div>
      </div>

      {/* sheet tabs */}
      <div className="h-[32px] flex items-start text-[13.7px] text-[#444] shrink-0">
        <ChevronLeft size={15} strokeWidth={1.2} className="ml-[24px] mt-[9px] text-[#aaa]" />
        <ChevronRight size={15} strokeWidth={1.2} className="ml-[18px] mt-[9px] text-[#888]" />
        <div className="ml-[45px] w-[58px] h-[28px] rounded-b-[6px] bg-white shadow-[0_1px_2px_rgba(0,0,0,0.2)] flex flex-col items-center pt-[4px]">
          <span className="font-semibold text-[13px] text-[#185c37] leading-[18px]">Layer 1</span>
          <div className="w-[43px] h-[2px] mt-[1px] bg-[#107c41]" />
        </div>
        <div className="mt-[6px] ml-[4px] flex items-center h-[20px]">
          <div className="w-[1px] h-[20px] bg-[#cfcfcf]" />
          <span className="w-[108px] text-center">Input Motion</span>
          <div className="w-[1px] h-[20px] bg-[#cfcfcf]" />
          <span className="w-[65px] text-center">Profile</span>
          <div className="w-[1px] h-[20px] bg-[#cfcfcf]" />
          <span className="w-[168px] text-center whitespace-nowrap">Mobilized Shear Stress</span>
          <div className="w-[1px] h-[20px] bg-[#cfcfcf]" />
          <span className="w-[66px] text-center">Sheet1</span>
          <div className="w-[1px] h-[20px] bg-[#cfcfcf]" />
          <Plus size={15} strokeWidth={1.2} className="ml-[39px]" />
        </div>
        <div className="flex-1" />
        <div className="mt-[8px] mr-[14px] flex flex-col gap-[2px]">
          <span className="w-[2px] h-[2px] bg-[#333]" />
          <span className="w-[2px] h-[2px] bg-[#333]" />
          <span className="w-[2px] h-[2px] bg-[#333]" />
        </div>
        <div className="mt-[7px] mr-[19px] w-[730px] h-[17px] rounded-full bg-[#f7f7f7] flex items-center pl-[5px] pr-[5px]">
          <div className="w-0 h-0 border-y-[5px] border-y-transparent border-r-[6px] border-r-[#6e6e6e]" />
          <div className="ml-[6px] w-[678px] h-[9px] rounded-full bg-[#6e6e6e]" />
          <div className="flex-1" />
          <div className="w-0 h-0 border-y-[5px] border-y-transparent border-l-[6px] border-l-[#6e6e6e]" />
        </div>
      </div>

      {/* status bar */}
      <div className="h-[22px] border-t border-white bg-[#f3f3f3] flex items-center text-[11.5px] text-[#444] shrink-0">
        <span className="ml-[11px]">Ready</span>
        <svg width="15" height="16" viewBox="0 0 15 16" fill="none" className="ml-[20px]">
          <circle cx="7.500" cy="3" r="2" stroke="#555" />
          <path d="M1 4l4 3v2l-2 6M14 4l-4 3v2l2 6M6 11l1.500 1L12 8" stroke="#555" />
        </svg>
        <span className="ml-[3px]">Accessibility: Good to go</span>
        <div className="flex-1" />
        <div className="w-[40px] h-[21px] bg-[#e0e0e0] flex items-center justify-center">
          <svg width="14" height="14" viewBox="0 0 14 14" fill="none"><path d="M.5.5H13.500V13.500H.5zM5 1V13M9 1V13M1 5H13M1 9H13" stroke="#333" /></svg>
        </div>
        <div className="w-[40px] flex justify-center">
          <svg width="14" height="15" viewBox="0 0 14 15" fill="none"><path d="M.5.5H13.500V14.500H.5zM3 3H11V12H3zM5 5.500H9M5 7.500H9M5 9.500H9" stroke="#333" /></svg>
        </div>
        <div className="w-[40px] flex justify-center">
          <svg width="14" height="15" viewBox="0 0 14 15" fill="none"><path d="M.5.5H13.500V14.500H.5zM.5 9.500H7V.5M10 .5V6" stroke="#333" /></svg>
        </div>
        <div className="ml-[6px] w-[8px] h-[1.5px] bg-[#333]" />
        <div className="ml-[5px] w-[99px] h-[1px] bg-[#666] flex items-center justify-center">
          <div className="w-[5px] h-[15px] bg-[#666]" />
        </div>
        <Plus size={11} strokeWidth={1.3} className="ml-[4px] text-[#333]" />
        <span className="ml-[13px] mr-[7px] w-[27px] text-[11px] tracking-[-0.3px] text-[#333]">100%</span>
      </div>
    </div>
  );
}
